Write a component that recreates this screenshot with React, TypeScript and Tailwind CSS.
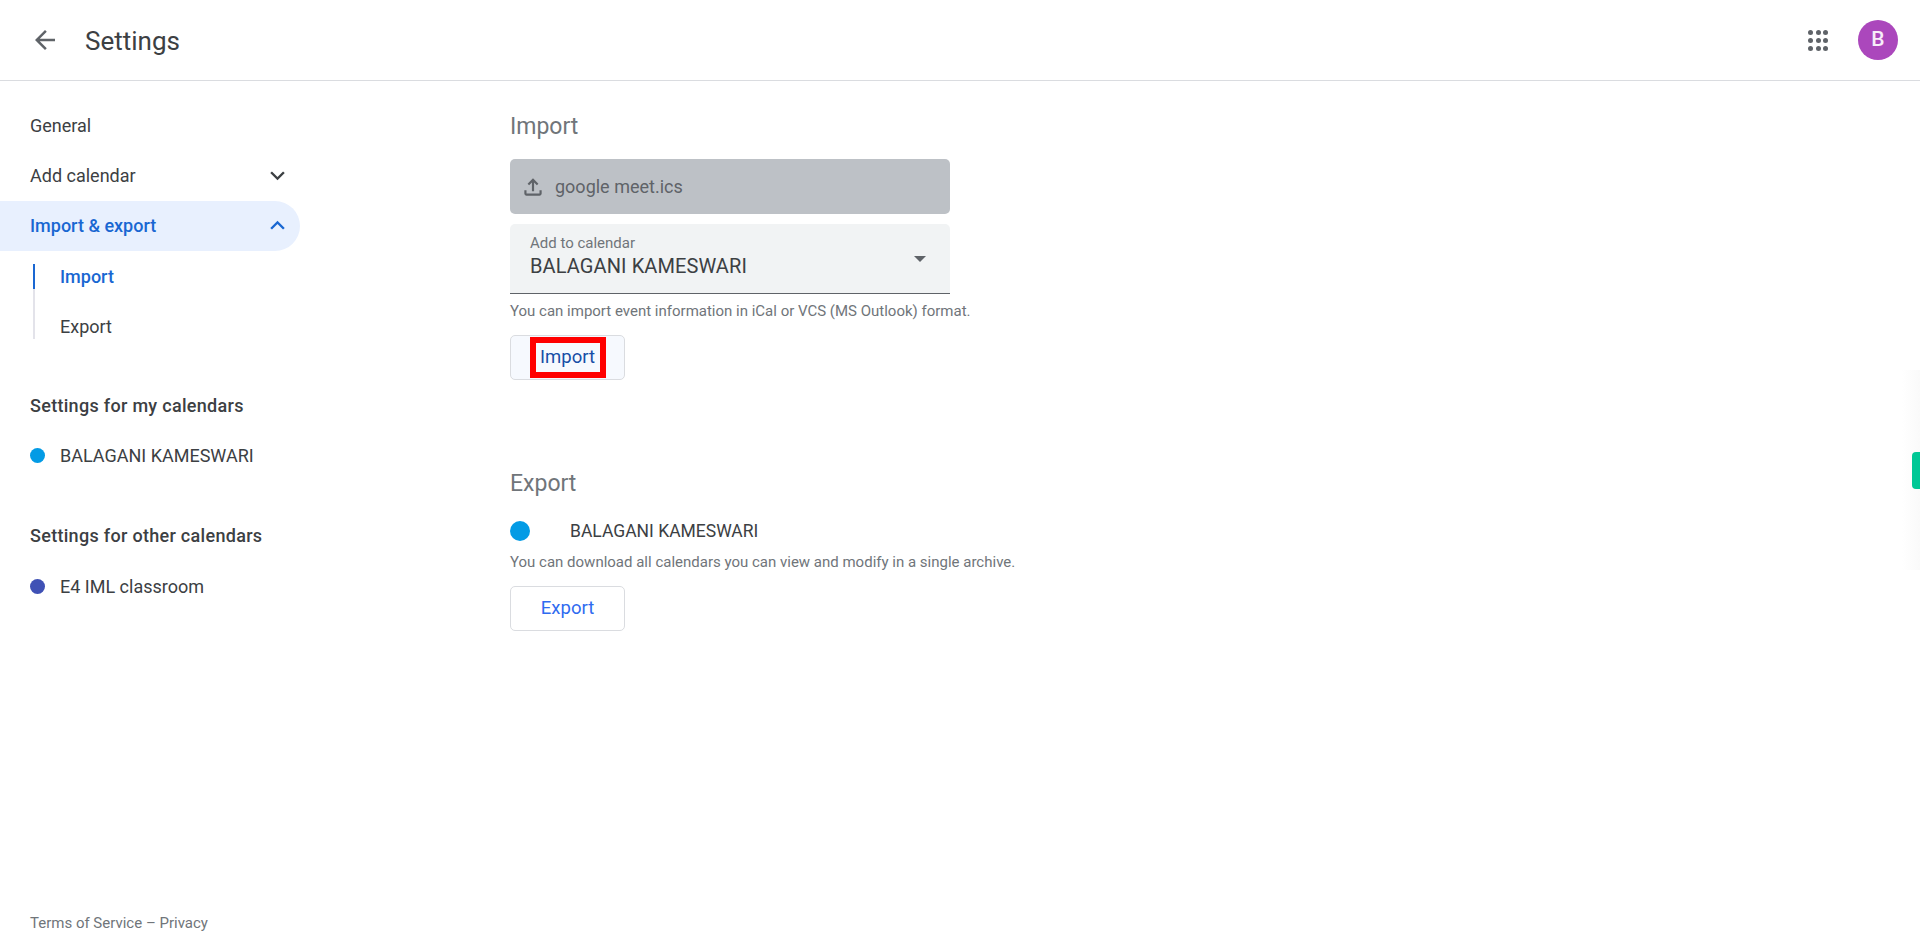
import React from 'react'

const FONT = "font-['Roboto','Liberation_Sans',sans-serif]"

const Chevron = ({ up, color }: { up?: boolean; color: string }) => (
  <svg width="29" height="29" viewBox="0 0 24 24" fill={color} className={up ? 'rotate-180' : ''}>
    <path d="M7.41 8.59 12 13.17l4.59-4.58L18 10l-6 6-6-6z" />
  </svg>
)

const Dot = ({ color }: { color: string }) => (
  <span className="w-[15px] h-[15px] rounded-full shrink-0" style={{ background: color }} />
)

export default function App() {
  return (
    <div className={`${FONT} relative h-[942px] overflow-hidden bg-white flex flex-col text-[#3c4043]`}>
      {/* Top bar */}
      <header className="h-[81px] shrink-0 border-b border-[#dadce0] flex items-center pl-[30px] pr-[22px]">
        <svg width="30" height="30" viewBox="0 0 24 24" fill="#5f6368">
          <path d="M20 11H7.83l5.59-5.59L12 4l-8 8 8 8 1.41-1.41L7.83 13H20v-2z" />
        </svg>
        <h1 className="ml-[25px] mt-[2px] text-[26px] leading-[30px] text-[#3c4043]">Settings</h1>
        <div className="ml-auto flex items-center gap-[30px]">
          <div className="grid grid-cols-3 gap-[3px] w-[20px]">
            {Array.from({ length: 9 }).map((_, i) => (
              <span key={i} className="w-[5px] h-[5px] rounded-full bg-[#5f6368]" />
            ))}
          </div>
          <div className="w-10 h-10 rounded-full bg-[#ab47bc] text-white/90 flex items-center justify-center text-[21px] font-medium">B</div>
        </div>
      </header>

      <div className="flex-1 flex min-h-0">
        {/* Sidebar */}
        <aside className="w-[510px] shrink-0 flex flex-col text-[18px]">
          <div className="w-[300px] pt-[20px]">
            <div className="h-[50px] flex items-center pl-[30px] pb-[2px]">General</div>
            <div className="h-[50px] flex items-center justify-between pl-[30px] pr-[8px] pb-[2px]">
              Add calendar
              <Chevron color="#3c4043" />
            </div>
            <div className="h-[50px] flex items-center justify-between pl-[30px] pr-[8px] pb-[2px] bg-[#e8f0fe] rounded-r-full text-[#1967d2] font-medium">
              Import &amp; export
              <Chevron up color="#1967d2" />
            </div>
            <div className="ml-[33px] mt-[13px] w-fit border-l-2 border-[#e3e3ea]">
              <div className="h-[25px] -ml-[2px] border-l-2 border-[#1a67d2] pl-[25px] flex items-center text-[#1967d2] font-medium">Import</div>
              <div className="h-[50px] pl-[25px] flex items-end">
                <span className="h-[25px] leading-[25px]">Export</span>
              </div>
            </div>
          </div>

          <div className="pl-[30px] mt-[55px] text-[#3c4043]">
            <div className="leading-[24px] font-medium tracking-[0.3px]">Settings for my calendars</div>
            <div className="mt-[25px] h-[24px] flex items-center gap-[15px]">
              <Dot color="#039be5" />
              BALAGANI KAMESWARI
            </div>
            <div className="mt-[57px] leading-[24px] font-medium tracking-[0.3px]">Settings for other calendars</div>
            <div className="mt-[26px] h-[24px] flex items-center gap-[15px]">
              <Dot color="#3f51b5" />
              E4 IML classroom
            </div>
          </div>

          <div className="mt-auto mb-[9px] pl-[30px] text-[15px] leading-[20px] text-[#70757a]">Terms of Service – Privacy</div>
        </aside>

        {/* Import and export forms */}
        <main className="flex-1 pt-[31px]">
          <h2 className="text-[23px] leading-[30px] text-[#70757a]">Import</h2>

          <div className="mt-[17px] w-[440px] h-[55px] rounded-[5px] bg-[#bdc1c6] flex items-center pl-[10px] text-[18px] text-[#5f6368]">
            <svg width="26" height="26" viewBox="0 0 24 24" fill="#5f6368">
              <path d="M18 15v3H6v-3H4v3c0 1.1.9 2 2 2h12c1.1 0 2-.9 2-2v-3h-2zM7 9l1.41 1.41L11 7.83V16h2V7.83l2.59 2.58L17 9l-5-5-5 5z" />
            </svg>
            <span className="ml-[9px]">google meet.ics</span>
          </div>

          <div className="relative mt-[10px] w-[440px] h-[70px] rounded-t-[5px] bg-[#f1f3f4] border-b border-[#5f6368] pl-[20px] pt-[9px]">
            <div className="text-[15px] leading-[20px] text-[#70757a]">Add to calendar</div>
            <div className="text-[20px] leading-[26px] tracking-[0.1px] text-[#3c4043]">BALAGANI KAMESWARI</div>
            <span className="absolute right-[24px] top-[32px] w-0 h-0 border-x-[6px] border-x-transparent border-t-[6px] border-t-[#5f6368]" />
          </div>

          <p className="mt-[7px] text-[15px] leading-[20px] text-[#70757a]">You can import event information in iCal or VCS (MS Outlook) format.</p>

          <button className="mt-[14px] w-[115px] h-[45px] rounded-[5px] border border-[#dadce0] bg-[#f6f9fe] flex items-center justify-center">
            <span className="w-[76px] h-[41px] border-[6px] border-[#ff0000] bg-[#f6f9fe] flex items-center justify-center text-[18.5px] text-[#174ea6]">Import</span>
          </button>

          <h2 className="mt-[89px] text-[23px] leading-[30px] text-[#70757a]">Export</h2>

          <div className="mt-[20px] h-[24px] flex items-center text-[17.5px] text-[#3c4043]">
            <span className="w-[20px] h-[20px] rounded-full bg-[#039be5]" />
            <span className="ml-[40px]">BALAGANI KAMESWARI</span>
          </div>

          <p className="mt-[9px] text-[15px] leading-[20px] text-[#70757a]">You can download all calendars you can view and modify in a single archive.</p>

          <button className="mt-[14px] w-[115px] h-[45px] rounded-[5px] border border-[#dadce0] bg-white flex items-center justify-center text-[18.5px] text-[#2f6bf0]">Export</button>
        </main>
      </div>

      {/* Edge shadow and side tab over the page */}
      <div className="absolute right-0 top-[370px] w-[18px] h-[200px] bg-gradient-to-r from-transparent to-[#fafafa]" />
      <div className="absolute right-0 top-[452px] w-[8px] h-[37px] rounded-l-[4px] bg-[#00c896]" />
    </div>
  )
}
